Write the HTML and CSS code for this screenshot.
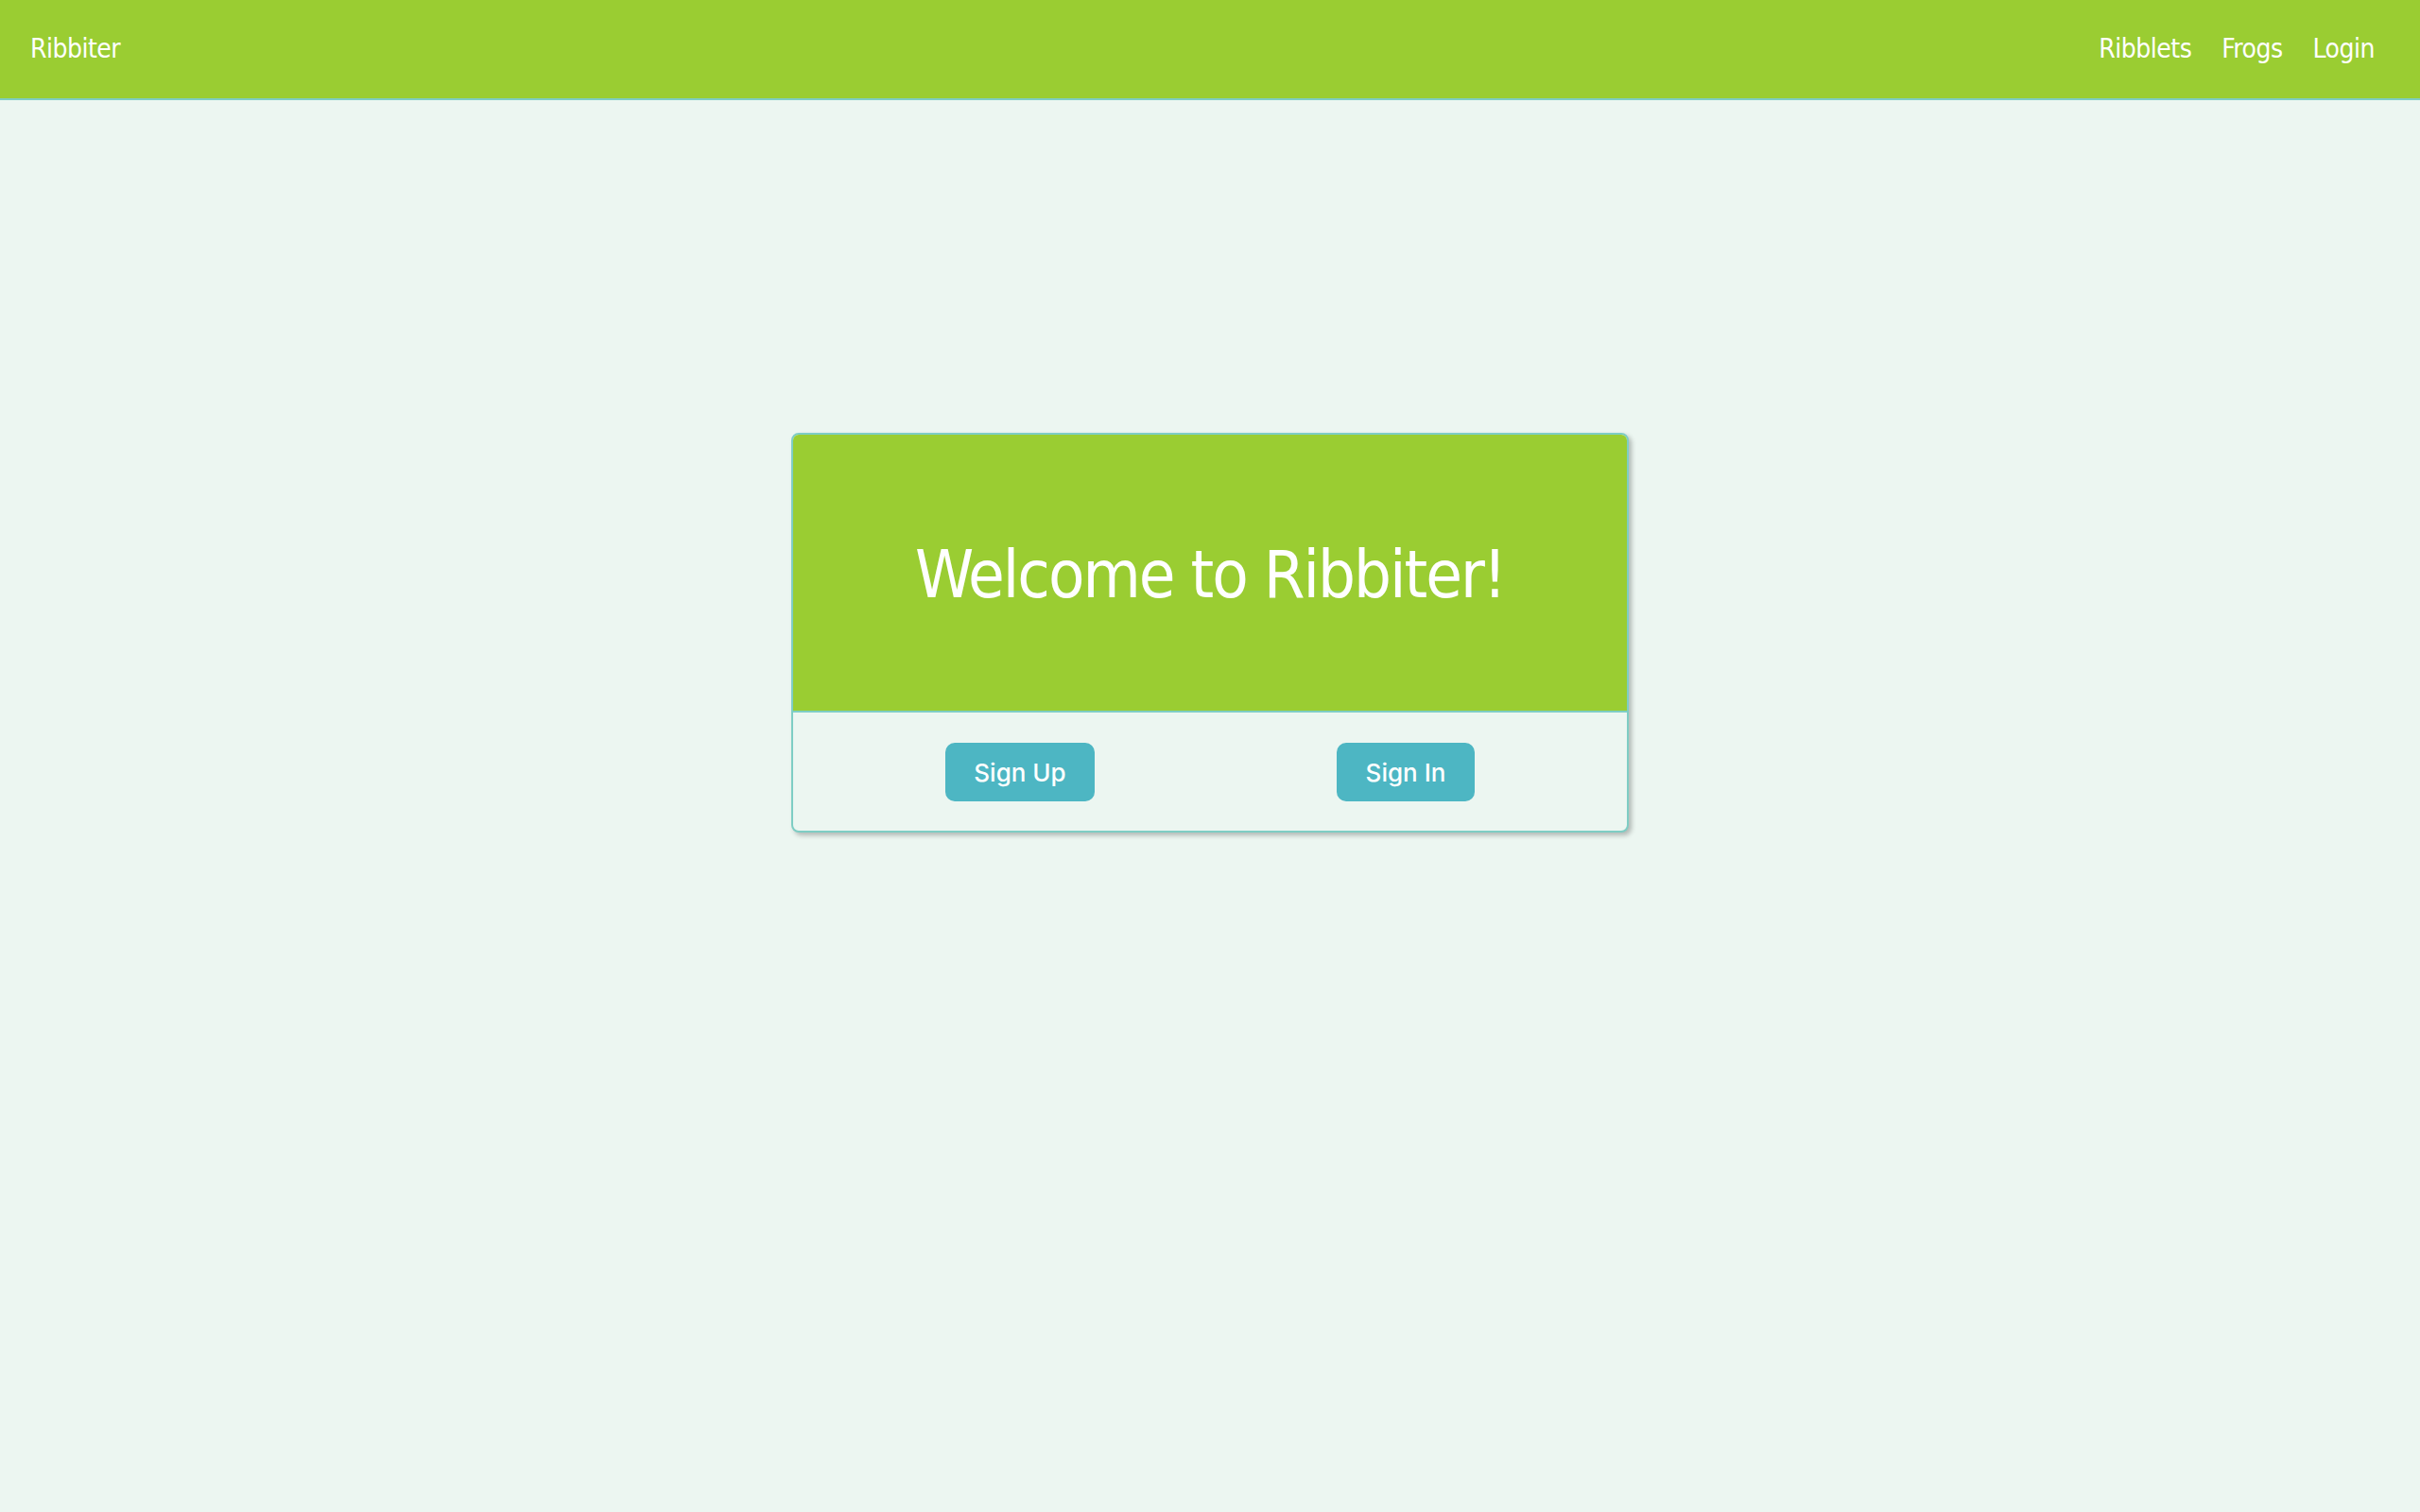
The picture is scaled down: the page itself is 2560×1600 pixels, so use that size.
FILE: index.html
```html
<!DOCTYPE html>
<html lang="en">
<head>
<meta charset="utf-8">
<title>Ribbiter</title>
<link rel="stylesheet" href="styles.css">
</head>
<body>
<header class="topbar">
  <a class="brand" href="#">Ribbiter</a>
  <nav class="nav">
    <a href="#">Ribblets</a>
    <a href="#">Frogs</a>
    <a href="#">Login</a>
  </nav>
</header>
<main class="main">
  <section class="card">
    <div class="card-hero">
      <h1 class="title">Welcome to Ribbiter!</h1>
    </div>
    <div class="card-actions">
      <a class="btn btn-up" href="#">Sign Up</a>
      <a class="btn btn-in" href="#">Sign In</a>
    </div>
  </section>
</main>
</body>
</html>
```

FILE: styles.css
```css
html, body {
  margin: 0;
  padding: 0;
}
body {
  background: #ecf6f1;
  min-height: 1600px;
  font-family: "DejaVu Sans Condensed", "DejaVu Sans", sans-serif;
}
a {
  text-decoration: none;
}
.topbar {
  height: 104px;
  background: #9acd32;
  border-bottom: 2px solid #7ecdc4;
  display: flex;
  align-items: center;
  justify-content: space-between;
  padding: 0 48px 0 32px;
}
.brand, .nav a {
  color: #ffffff;
  font-size: 28px;
  letter-spacing: -0.5px;
  line-height: 1;
}
.nav {
  display: flex;
  gap: 32px;
}
.main {
  display: flex;
  justify-content: center;
  padding-top: 352px;
}
.card {
  width: 882px;
  border: 2px solid #7ecdc4;
  border-radius: 8px;
  background: #ecf6f1;
  box-shadow: 3px 3px 5px rgba(0, 0, 0, 0.25);
  overflow: hidden;
}
.card-hero {
  height: 292px;
  background: #9acd32;
  border-bottom: 2px solid #7ecdc4;
  display: flex;
  align-items: center;
  justify-content: center;
}
.title {
  margin: 0;
  padding-top: 4px;
  color: #ffffff;
  font-weight: normal;
  font-size: 70px;
  letter-spacing: -2px;
  line-height: 1;
}
.card-actions {
  display: flex;
  justify-content: center;
  gap: 256px;
  padding: 32px 0 31px;
}
.btn {
  display: flex;
  align-items: center;
  justify-content: center;
  height: 62px;
  box-sizing: border-box;
  border-radius: 10px;
  background: #4db6c3;
  color: #ffffff;
  font-family: Inter, "Liberation Sans", sans-serif;
  font-weight: 500;
  font-size: 26px;
  letter-spacing: 0;
}
.btn-up {
  width: 158px;
}
.btn-in {
  width: 146px;
}
```
